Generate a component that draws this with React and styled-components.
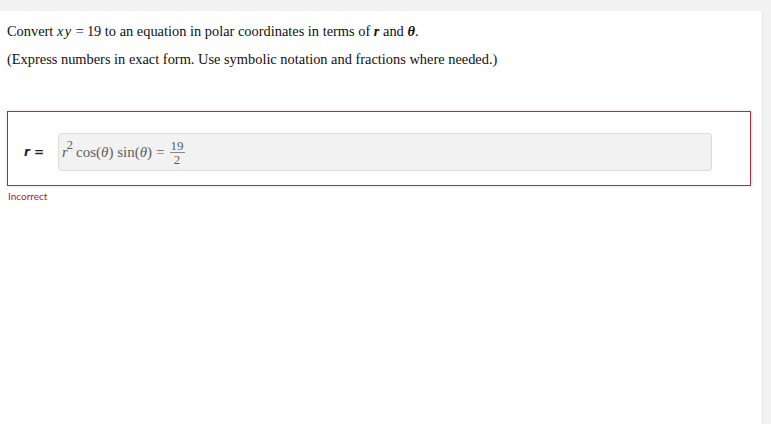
import React from "react";
import styled, { createGlobalStyle } from "styled-components";

const Global = createGlobalStyle`
  html, body {
    margin: 0;
    background: #f2f2f2;
  }
`;

const Page = styled.div`
  width: 771px;
  height: 424px;
  padding-top: 11px;
  box-sizing: border-box;
  display: flex;
`;

const Panel = styled.div`
  width: 763px;
  background: #fff;
  border-right: 1px solid #e4e4e4;
  box-sizing: border-box;
  padding: 11px 0 0 7px;
`;

const Prompt = styled.p`
  margin: 0 0 10px;
  font-family: "Liberation Serif", "Times New Roman", serif;
  font-size: 14.4px;
  line-height: 18px;
  color: #111;
`;

const Var = styled.i`
  font-style: italic;
  font-weight: ${(p) => (p.$bold ? 700 : 400)};
  letter-spacing: ${(p) => (p.$wide ? "1.5px" : "0")};
`;

const Eq = styled.span`
  margin: 0 ${(p) => p.$gap || 3}px;
`;

const AnswerBox = styled.div`
  margin-top: 43px;
  width: 744px;
  height: 75px;
  box-sizing: border-box;
  border: 1px solid #a8303c;
  box-shadow: 0 0 3px rgba(220, 80, 90, 0.25);
  display: flex;
  align-items: flex-start;
  padding: 21px 0 0 15px;
`;

const Label = styled.span`
  width: 35px;
  height: 38px;
  display: flex;
  align-items: center;
  font-family: "DejaVu Sans", sans-serif;
  font-size: 12px;
  font-weight: 700;
  color: #222;
  i {
    font-style: italic;
    margin: 0 4px 0 1px;
  }
`;

const Field = styled.div`
  width: 654px;
  height: 38px;
  box-sizing: border-box;
  background: #f2f2f2;
  border: 1px solid #dcdcdc;
  border-radius: 3px;
  display: flex;
  align-items: center;
  padding-left: 3px;
  font-family: "Liberation Serif", "Times New Roman", serif;
  font-size: 15px;
  color: #5e5e5e;
  white-space: pre;
`;

const Sup = styled.span`
  font-size: 12.5px;
  position: relative;
  top: -7px;
  margin: 0 3px 0 -1px;
`;

const Frac = styled.span`
  display: inline-flex;
  flex-direction: column;
  align-items: center;
  font-size: 13px;
  line-height: 13px;
  margin-left: 1px;
  span:first-child {
    border-bottom: 1px solid #888;
    padding: 0 1px;
  }
`;

const Status = styled.div`
  margin-top: 4px;
  margin-left: 1px;
  font-family: Lato, "Open Sans", sans-serif;
  font-size: 10px;
  color: #b0202c;
`;

export default function App() {
  return (
    <>
      <Global />
      <Page>
        <Panel>
          <Prompt>
            Convert <Var $wide>xy</Var>
            <Eq>=</Eq>19 to an equation in polar coordinates in terms of <Var $bold>r</Var> and{" "}
            <Var $bold>θ</Var>.
          </Prompt>
          <Prompt>(Express numbers in exact form. Use symbolic notation and fractions where needed.)</Prompt>
          <AnswerBox>
            <Label>
              <i>r</i>=
            </Label>
            <Field>
              <i>r</i>
              <Sup>2</Sup>cos(<i>θ</i>) sin(<i>θ</i>)<Eq $gap={4}>=</Eq>
              <Frac>
                <span>19</span>
                <span>2</span>
              </Frac>
            </Field>
          </AnswerBox>
          <Status>Incorrect</Status>
        </Panel>
      </Page>
    </>
  );
}
